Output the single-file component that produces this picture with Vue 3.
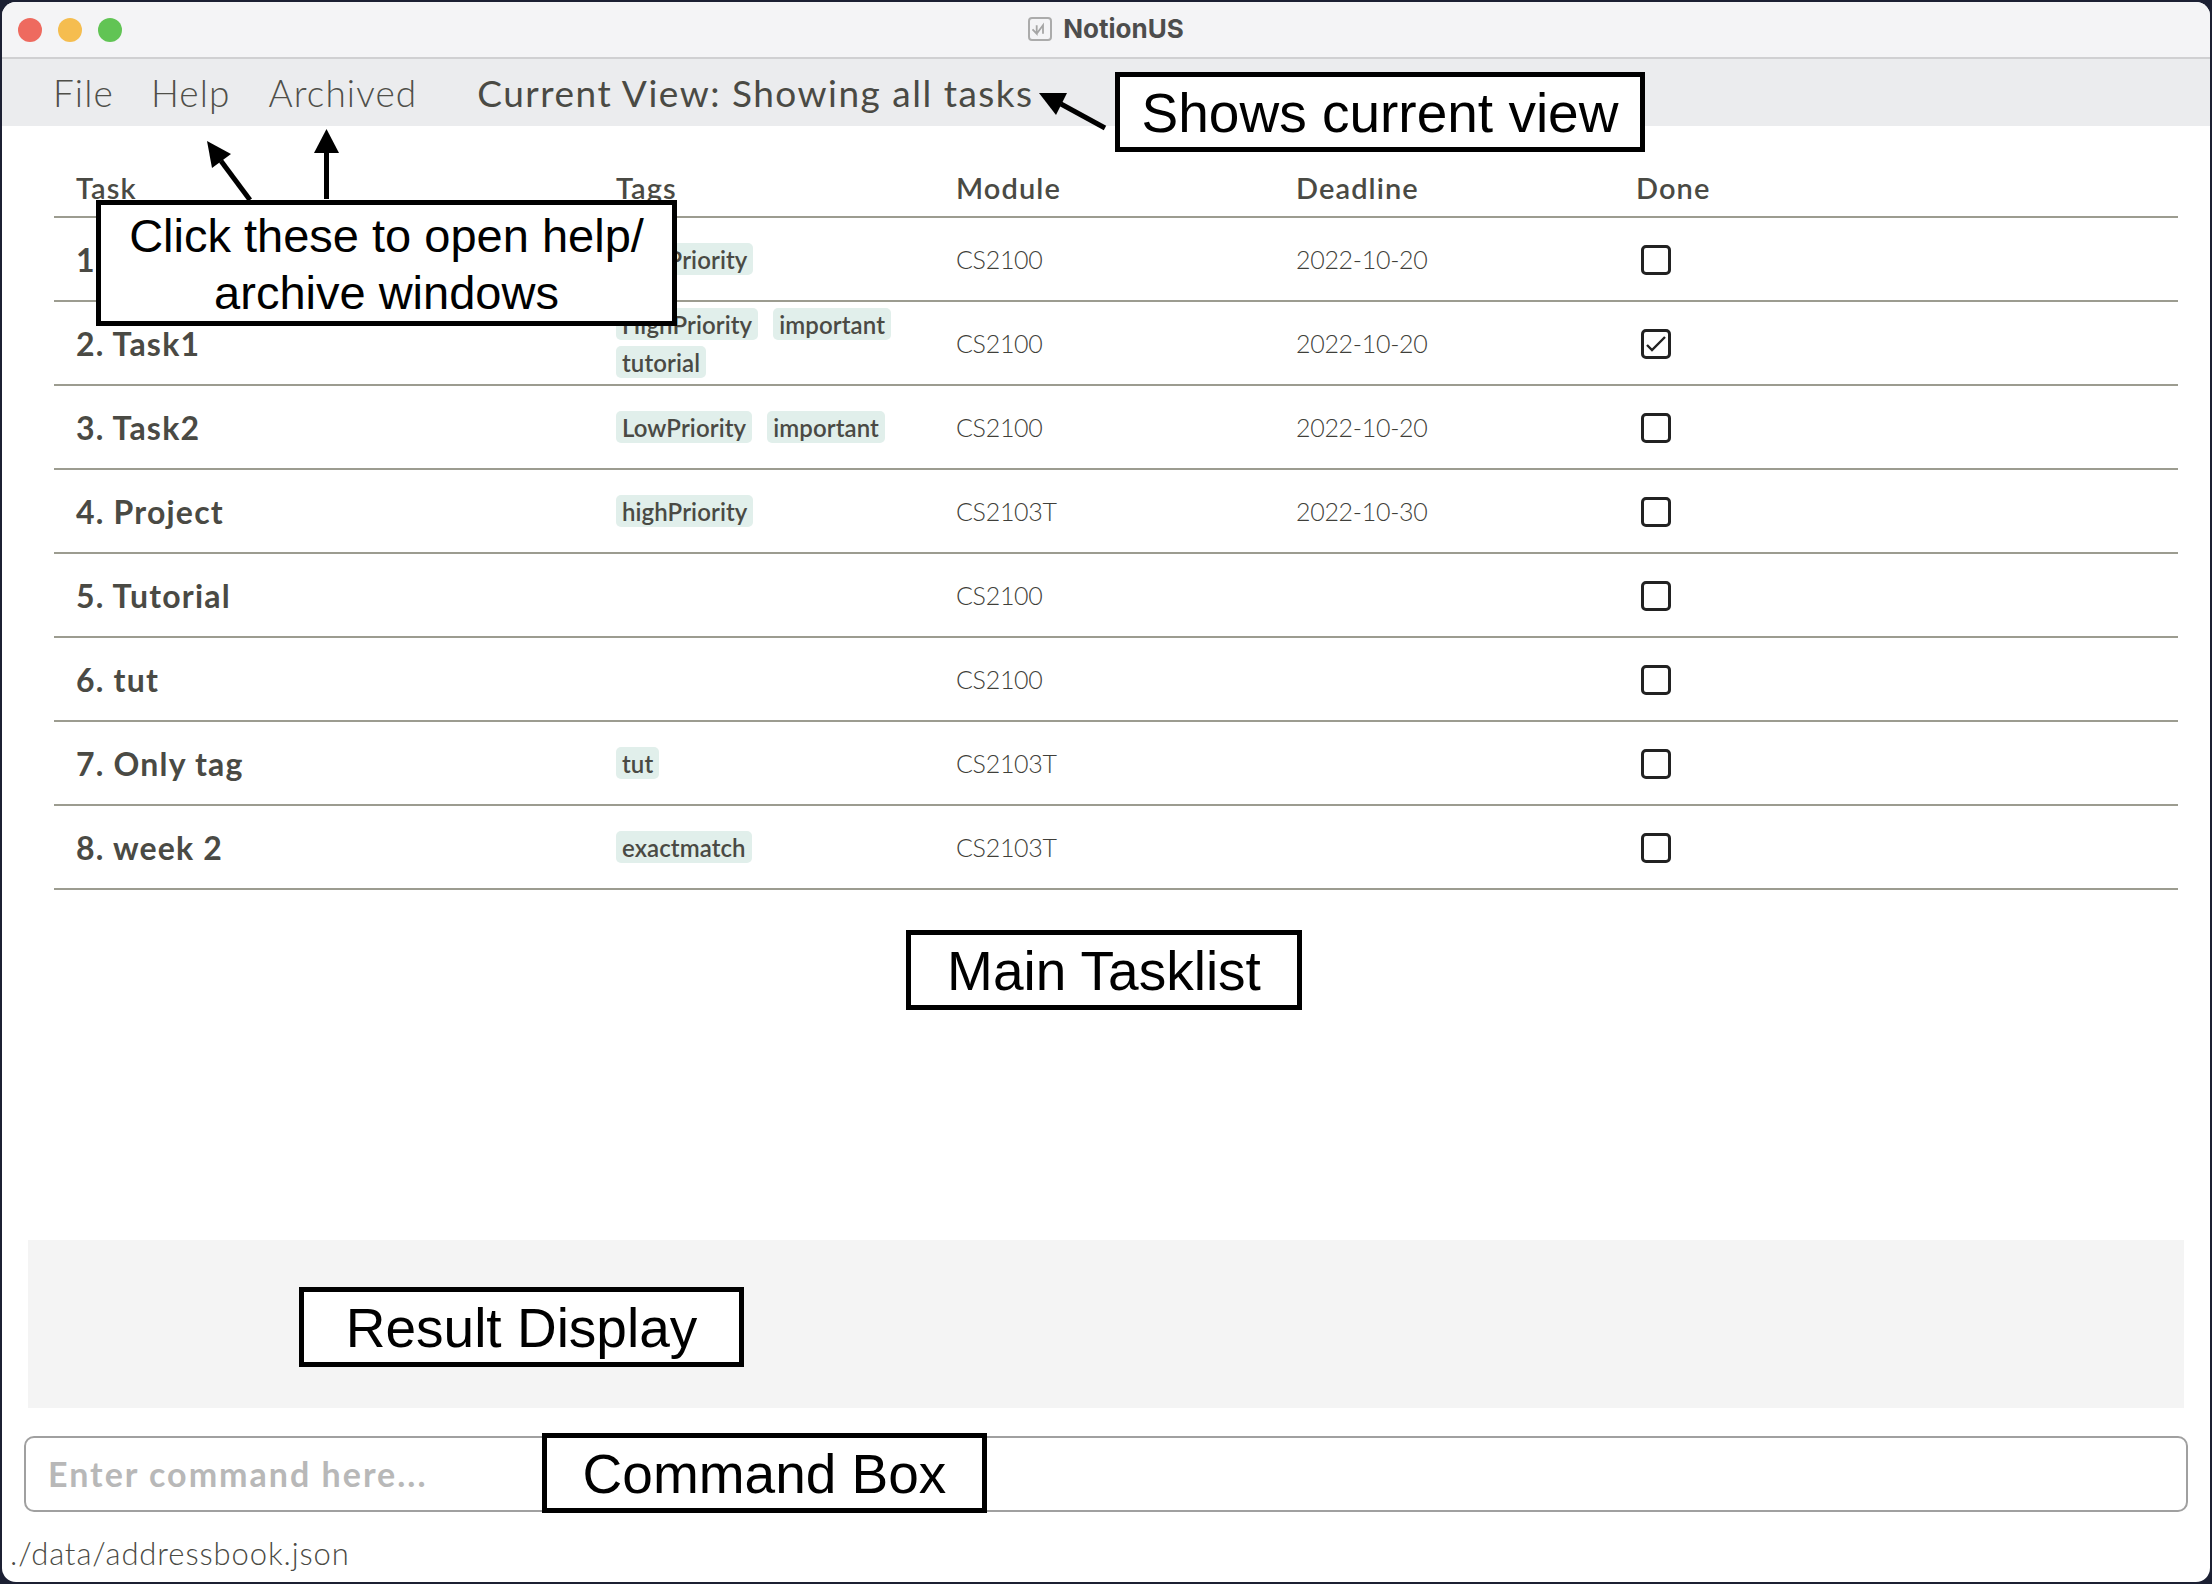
<template>
  <div class="page">
    <div class="window">
      <div class="titlebar">
        <div class="lights">
          <span class="light red"></span>
          <span class="light yellow"></span>
          <span class="light green"></span>
        </div>
        <div class="title">
          <svg class="app-icon" width="24" height="24" viewBox="0 0 24 24">
            <rect x="1" y="1" width="22" height="22" rx="3" fill="none" stroke="#ababab" stroke-width="2" />
            <path d="M4.500 12.300L8.700 16.700V8.300M8.700 16.700L15 8.300V16.700" fill="none" stroke="#a5a5a5" stroke-width="1.800" />
          </svg>
          <span>NotionUS</span>
        </div>
      </div>

      <div class="menubar">
        <span class="menu-item file">File</span>
        <span class="menu-item help">Help</span>
        <span class="menu-item archived">Archived</span>
        <span class="current-view">Current View: Showing all tasks</span>
      </div>

      <div class="tasklist">
        <div class="row head">
          <span>Task</span>
          <span>Tags</span>
          <span>Module</span>
          <span>Deadline</span>
          <span>Done</span>
        </div>
        <div v-for="(task, i) in tasks" :key="i" class="row">
          <span class="name">{{ i + 1 }}. {{ task.name }}</span>
          <div class="tags">
            <span v-for="tag in task.tags" :key="tag" class="tag">{{ tag }}</span>
          </div>
          <span class="plain">{{ task.module }}</span>
          <span class="plain">{{ task.deadline }}</span>
          <span class="checkbox">
            <svg v-if="task.done" width="24" height="24" viewBox="0 0 24 24">
              <path d="M3 13l5 5L21 5" fill="none" stroke="#222" stroke-width="2.400" />
            </svg>
          </span>
        </div>
      </div>

      <div class="result"></div>
      <div class="command">Enter command here...</div>
      <div class="status">./data/addressbook.json</div>
    </div>

    <svg class="arrows" width="2212" height="1584" viewBox="0 0 2212 1584">
      <path d="M250 200L221 161" stroke="#000" stroke-width="5" fill="none" />
      <path d="M207 141L231 154L212 168Z" fill="#000" />
      <path d="M326.500 199V150" stroke="#000" stroke-width="5" fill="none" />
      <path d="M326.500 129L339 153H314Z" fill="#000" />
      <path d="M1105 128L1061 104" stroke="#000" stroke-width="5" fill="none" />
      <path d="M1039 93L1067 93L1056 115Z" fill="#000" />
    </svg>

    <div class="note note-help">Click these to open help/<br />archive windows</div>
    <div class="note note-view">Shows current view</div>
    <div class="note note-list">Main Tasklist</div>
    <div class="note note-result">Result Display</div>
    <div class="note note-command">Command Box</div>
  </div>
</template>

<script setup>
const tasks = [
  { name: 'Task', tags: ['highPriority'], module: 'CS2100', deadline: '2022-10-20', done: false },
  { name: 'Task1', tags: ['HighPriority', 'important', 'tutorial'], module: 'CS2100', deadline: '2022-10-20', done: true },
  { name: 'Task2', tags: ['LowPriority', 'important'], module: 'CS2100', deadline: '2022-10-20', done: false },
  { name: 'Project', tags: ['highPriority'], module: 'CS2103T', deadline: '2022-10-30', done: false },
  { name: 'Tutorial', tags: [], module: 'CS2100', deadline: '', done: false },
  { name: 'tut', tags: [], module: 'CS2100', deadline: '', done: false },
  { name: 'Only tag', tags: ['tut'], module: 'CS2103T', deadline: '', done: false },
  { name: 'week 2', tags: ['exactmatch'], module: 'CS2103T', deadline: '', done: false }
]
</script>

<style>
html,
body {
  margin: 0;
  background: #1c2033;
  overflow: hidden;
}
</style>

<style scoped>
.page {
  position: relative;
  width: 2212px;
  height: 1584px;
  padding: 2px;
  box-sizing: border-box;
  font-family: Lato, sans-serif;
  color: #4a4a44;
}

.window {
  display: flex;
  flex-direction: column;
  height: 1580px;
  background: #fff;
  border-radius: 14px;
  overflow: hidden;
}

.titlebar {
  display: grid;
  grid-template-columns: 1fr auto 1fr;
  align-items: center;
  height: 57px;
  flex: none;
  box-sizing: border-box;
  border-bottom: 2px solid #d0d0d2;
  background: #f4f4f6;
}

.lights {
  display: flex;
  gap: 16px;
  padding-left: 16px;
}

.light {
  width: 24px;
  height: 24px;
  border-radius: 50%;
}

.red {
  background: #ee6a5f;
}

.yellow {
  background: #f5bd4f;
}

.green {
  background: #61c454;
}

.title {
  display: flex;
  align-items: center;
  gap: 11px;
  padding-bottom: 2px;
  font-family: Inter, sans-serif;
  font-size: 26px;
  font-weight: 700;
  color: #4d4d4d;
}

.menubar {
  display: flex;
  align-items: center;
  height: 67px;
  flex: none;
  padding-left: 51px;
  background: #ebecee;
  font-size: 37px;
}

.menu-item {
  font-weight: 300;
  letter-spacing: 1.1px;
  color: #4f4f49;
}

.help {
  margin-left: 37px;
}

.archived {
  margin-left: 38px;
}

.current-view {
  margin-left: 60px;
  font-size: 37px;
  font-weight: 400;
  letter-spacing: 1.5px;
}

.tasklist {
  flex: 1;
  margin: 0 32px 0 52px;
}

.row {
  display: grid;
  grid-template-columns: 540px 340px 340px 340px 1fr;
  align-items: center;
  height: 84px;
  box-sizing: border-box;
  border-bottom: 2px solid #9c9c90;
}

.row > * {
  padding-left: 22px;
}

.head {
  height: 92px;
  align-items: end;
  padding-bottom: 11px;
  font-size: 29px;
  font-weight: 600;
  letter-spacing: 1.1px;
}

.name {
  font-size: 32px;
  font-weight: 700;
  letter-spacing: 1.2px;
}

.plain {
  font-size: 25px;
  font-weight: 300;
  letter-spacing: -0.3px;
  color: #3f3f3a;
}

.tags {
  display: flex;
  flex-wrap: wrap;
  gap: 6px 15px;
}

.tag {
  display: flex;
  align-items: center;
  height: 32px;
  padding: 0 6px;
  border-radius: 5px;
  background: #e1efeb;
  font-size: 24px;
  font-weight: 600;
  letter-spacing: 0.1px;
}

.checkbox {
  display: flex;
  align-items: center;
  justify-content: center;
  width: 30px;
  height: 30px;
  margin: 2px 0 0 27px;
  padding: 0;
  box-sizing: border-box;
  border: 3px solid #222;
  border-radius: 5px;
}

.result {
  flex: none;
  height: 168px;
  margin: 0 26px;
  background: #f4f4f4;
}

.command {
  display: flex;
  align-items: center;
  flex: none;
  height: 76px;
  margin: 28px 22px 0 22px;
  padding: 0 0 2px 22px;
  box-sizing: border-box;
  border: 2px solid #a0a0a0;
  border-radius: 10px;
  color: #b8b8b8;
  font-size: 34px;
  font-weight: 700;
  letter-spacing: 2px;
}

.status {
  flex: none;
  height: 70px;
  display: flex;
  align-items: center;
  padding: 12px 0 0 8px;
  box-sizing: border-box;
  font-size: 31px;
  font-weight: 300;
  letter-spacing: 0.9px;
}

.arrows {
  position: absolute;
  left: 0;
  top: 0;
  pointer-events: none;
}

.note {
  position: absolute;
  display: flex;
  align-items: center;
  justify-content: center;
  box-sizing: border-box;
  padding-top: 1px;
  border: 5px solid #000;
  background: #fff;
  color: #000;
  font-family: "Liberation Sans", Arial, sans-serif;
  font-size: 55px;
  text-align: center;
}

.note-help {
  left: 96px;
  top: 200px;
  width: 581px;
  height: 126px;
  font-size: 47px;
  line-height: 57px;
}

.note-view {
  left: 1115px;
  top: 72px;
  width: 530px;
  height: 80px;
}

.note-list {
  left: 906px;
  top: 930px;
  width: 396px;
  height: 80px;
}

.note-result {
  left: 299px;
  top: 1287px;
  width: 445px;
  height: 80px;
}

.note-command {
  left: 542px;
  top: 1433px;
  width: 445px;
  height: 80px;
}
</style>
